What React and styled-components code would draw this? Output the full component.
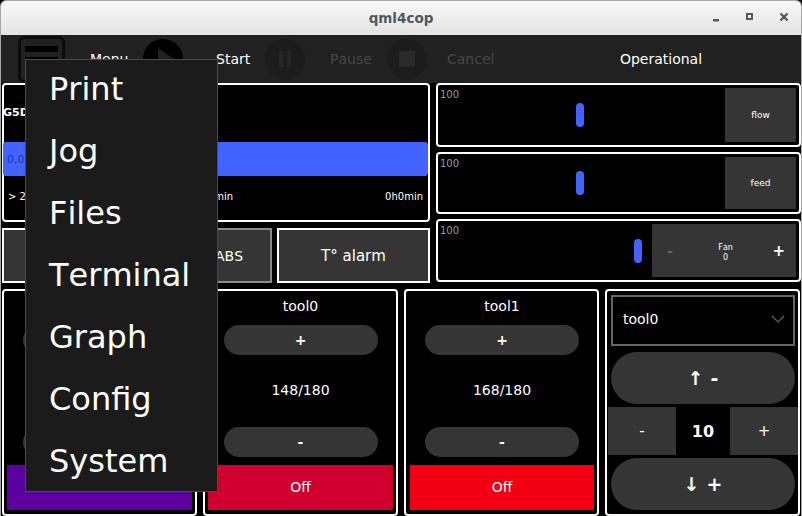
import React from 'react';
import styled, { createGlobalStyle } from 'styled-components';

const Global = createGlobalStyle`
    html, body {
        margin: 0;
        padding: 0;
        background: #000000;
    }
    * {
        box-sizing: border-box;
    }
`;

const Window = styled.div`
    position: relative;
    width: 802px;
    height: 516px;
    display: flex;
    flex-direction: column;
    overflow: hidden;
    background: #000000;
    border: 1px solid #a8a8a8;
    border-bottom: none;
    border-radius: 6px 6px 0 0;
    font-family: 'DejaVu Sans', sans-serif;
    font-kerning: none;
    color: #ffffff;
`;

const TitleBar = styled.div`
    height: 34px;
    flex: none;
    display: flex;
    align-items: center;
    justify-content: center;
    position: relative;
    background: linear-gradient(#f8f8f8, #e3e3e3);
    color: #50595e;
    font-size: 13.5px;
    font-weight: bold;
`;

const WindowButtons = styled.div`
    position: absolute;
    right: 12px;
    top: 11px;
    display: flex;
    gap: 24px;
`;

const Toolbar = styled.div`
    height: 48px;
    flex: none;
    display: flex;
    align-items: center;
    background: #212121;
    padding-left: 17px;
    font-size: 14px;
`;

const ToolItem = styled.div`
    width: ${p => p.$width}px;
    flex: none;
    display: flex;
    align-items: center;
`;

const ToolLabel = styled.span`
    margin-left: ${p => p.$left}px;
    color: ${p => (p.$off ? '#474747' : '#ffffff')};
`;

const Status = styled.span`
    margin-left: 109px;
    width: 110px;
    text-align: center;
`;

const Main = styled.div`
    flex: 1;
    display: flex;
    flex-direction: column;
    gap: 6px;
    padding: 0 0 0 1px;
`;

const TopArea = styled.div`
    height: 200px;
    display: flex;
    gap: 6px;
`;

const LeftCol = styled.div`
    width: 428px;
    display: flex;
    flex-direction: column;
    gap: 6px;
`;

const RightCol = styled.div`
    width: 365px;
    display: flex;
    flex-direction: column;
    gap: 5px;
`;

const Card = styled.div`
    border: 2px solid #ffffff;
    border-radius: 4px;
    background: #000000;
`;

const StatusCard = styled(Card)`
    height: 139px;
    display: flex;
    flex-direction: column;
`;

const FileName = styled.div`
    height: 57px;
    display: flex;
    align-items: center;
    margin-left: -1px;
    padding-bottom: 2px;
    font-size: 11px;
    font-weight: bold;
`;

const ProgressBar = styled.div`
    height: 34px;
    flex: none;
    display: flex;
    align-items: center;
    margin-left: -1px;
    padding-left: 4px;
    background: #4263ff;
    border-radius: 3px;
    color: #26389a;
    font-size: 11px;
`;

const TimeRow = styled.div`
    display: flex;
    padding: 15px 5px 0 4px;
    font-size: 10px;
`;

const TimeCell = styled.span`
    width: ${p => p.$width}px;
    text-align: ${p => p.$align || 'left'};
`;

const ButtonRow = styled.div`
    height: 55px;
    display: grid;
    grid-template-columns: 179px 86px 153px;
    gap: 5px;
`;

const ActionButton = styled.div`
    display: flex;
    align-items: center;
    justify-content: center;
    background: #353535;
    border: 2px solid ${p => p.$border};
    font-size: ${p => p.$size || 14}px;
`;

const SliderCard = styled(Card)`
    height: ${p => p.$height}px;
    display: flex;
    align-items: stretch;
    padding: 3px;
`;

const Track = styled.div`
    flex: 1;
    position: relative;
    display: flex;
    align-items: center;
    justify-content: ${p => (p.$max ? 'flex-end' : 'center')};
    padding-right: ${p => (p.$max ? '10px' : '6px')};
`;

const TrackValue = styled.span`
    position: absolute;
    left: -1px;
    top: 1px;
    color: #9a9a9a;
    font-size: 10px;
`;

const Thumb = styled.div`
    width: 8px;
    height: 24px;
    border-radius: 4px;
    background: #4263ff;
`;

const SliderButton = styled.div`
    width: 71px;
    display: flex;
    align-items: center;
    justify-content: center;
    background: #353535;
    font-size: 9px;
`;

const FanBox = styled.div`
    width: 144px;
    display: flex;
    align-items: center;
    justify-content: space-between;
    padding: 0 11px 0 15px;
    background: #353535;
`;

const FanLabel = styled.div`
    font-size: 8px;
    line-height: 10px;
    text-align: center;
    margin-left: 6px;
    padding-top: 4px;
`;

const FanStep = styled.span`
    font-size: ${p => (p.$off ? '14px' : '15px')};
    color: ${p => (p.$off ? '#666666' : '#ffffff')};
    font-weight: bold;
`;

const BottomArea = styled.div`
    flex: 1;
    display: grid;
    grid-template-columns: 195px 195px 195px 195px;
    gap: 6px;
`;

const ToolCard = styled(Card)`
    display: flex;
    flex-direction: column;
    align-items: center;
    padding: 0 3px 4px ${p => p.$left || 3}px;
    font-size: 14px;
`;

const ToolName = styled.div`
    height: 34px;
    flex: none;
    display: flex;
    align-items: center;
    padding-bottom: 5px;
`;

const StepButton = styled.div`
    width: 154px;
    height: 30px;
    flex: none;
    display: flex;
    align-items: center;
    justify-content: center;
    background: #353535;
    border-radius: 15px;
    font-weight: bold;
    font-size: 14px;
`;

const Temp = styled.div`
    height: 72px;
    flex: none;
    display: flex;
    align-items: center;
    padding-bottom: 2px;
`;

const HeatButton = styled.div`
    align-self: stretch;
    margin-top: 8px;
    flex: 1;
    display: flex;
    align-items: center;
    justify-content: center;
    padding-bottom: 2px;
    background: ${p => p.$color};
`;

const JogCard = styled(Card)`
    display: flex;
    flex-direction: column;
    padding: 4px 0;
    font-size: 14px;
`;

const Combo = styled.div`
    height: 51px;
    margin: 0 3px 0 4px;
    flex: none;
    display: flex;
    align-items: center;
    justify-content: space-between;
    padding: 0 8px 4px 10px;
    border: 2px solid #666666;
`;

const JogPill = styled.div`
    height: 52px;
    margin: ${p => p.$top}px 3px 0 4px;
    flex: none;
    display: flex;
    align-items: center;
    justify-content: center;
    gap: 7px;
    background: #353535;
    border-radius: 26px;
    font-weight: bold;
    font-size: 19px;
`;

const JogRow = styled.div`
    height: 48px;
    flex: none;
    display: grid;
    grid-template-columns: 68px 1fr 68px;
    margin: 3px 0 0 1px;
`;

const JogStep = styled.div`
    display: flex;
    align-items: center;
    justify-content: center;
    background: #353535;
    font-size: 15px;
`;

const JogValue = styled.div`
    display: flex;
    align-items: center;
    justify-content: center;
    font-weight: bold;
    font-size: 16px;
`;

const MenuPanel = styled.div`
    position: absolute;
    left: 24px;
    top: 58px;
    width: 193px;
    height: 433px;
    padding: 0 0 0 23px;
    background: #1b1b1b;
    border: 1px solid #4a4a4a;
    display: flex;
    flex-direction: column;
`;

const MenuItem = styled.div`
    height: 62px;
    flex: none;
    display: flex;
    align-items: center;
    padding-bottom: 4px;
    font-size: 32px;
`;

const MinIcon = () => (
    <svg width="10" height="10" viewBox="0 0 10 10" fill="#50595e">
        <rect x="2" y="7" width="6" height="2.5" />
    </svg>
);

const MaxIcon = () => (
    <svg width="10" height="10" viewBox="0 0 10 10" fill="none" stroke="#50595e" strokeWidth="2">
        <rect x="2" y="2" width="5" height="5" />
    </svg>
);

const CloseIcon = () => (
    <svg width="10" height="10" viewBox="0 0 10 10" fill="none" stroke="#50595e" strokeWidth="2.4">
        <path d="M1.5 1.5 L8.5 8.5 M8.5 1.5 L1.5 8.5" />
    </svg>
);

const HamburgerIcon = () => (
    <svg width="47" height="47" viewBox="0 0 47 47">
        <rect x="1.5" y="1.5" width="44" height="44" rx="5" fill="none" stroke="#0c0c0c" strokeWidth="3" />
        <rect x="7" y="10" width="33" height="6" fill="#000000" />
        <rect x="7" y="21" width="33" height="6" fill="#000000" />
        <rect x="7" y="32" width="33" height="6" fill="#000000" />
    </svg>
);

const RoundIcon = ({ circle, mark, type }) => (
    <svg width="40" height="40" viewBox="0 0 40 40">
        <circle cx="20" cy="20" r="20" fill={circle} />
        {type === 'play' && <path d="M15 9 L31 20 L15 31 Z" fill={mark} />}
        {type === 'pause' && (
            <g fill={mark}>
                <rect x="14" y="12" width="4" height="16" />
                <rect x="22" y="12" width="4" height="16" />
            </g>
        )}
        {type === 'stop' && <rect x="12" y="12" width="16" height="16" fill={mark} />}
    </svg>
);

const Chevron = () => (
    <svg width="14" height="8" viewBox="0 0 14 8" fill="none" stroke="#666666" strokeWidth="1.2">
        <path d="M1 1 L7 7 L13 1" />
    </svg>
);

const menuItems = ['Print', 'Jog', 'Files', 'Terminal', 'Graph', 'Config', 'System'];

const tools = [
    { id: 'bed', name: '', temp: '', color: '#5c00a0' },
    { id: 'tool0', name: 'tool0', temp: '148/180', color: '#d0002e' },
    { id: 'tool1', name: 'tool1', temp: '168/180', color: '#f00010', left: 4 },
];

function App() {
    return (
        <Window>
            <Global />
            <TitleBar>
                qml4cop
                <WindowButtons>
                    <MinIcon />
                    <MaxIcon />
                    <CloseIcon />
                </WindowButtons>
            </TitleBar>
            <Toolbar>
                <ToolItem $width={125}>
                    <HamburgerIcon />
                    <ToolLabel $left={25}>Menu</ToolLabel>
                </ToolItem>
                <ToolItem $width={122}>
                    <RoundIcon type="play" circle="#000000" mark="#212121" />
                    <ToolLabel $left={33}>Start</ToolLabel>
                </ToolItem>
                <ToolItem $width={122}>
                    <RoundIcon type="pause" circle="#1c1c1c" mark="#262626" />
                    <ToolLabel $left={25} $off>Pause</ToolLabel>
                </ToolItem>
                <ToolItem $width={110}>
                    <RoundIcon type="stop" circle="#1c1c1c" mark="#2a2a2a" />
                    <ToolLabel $left={20} $off>Cancel</ToolLabel>
                </ToolItem>
                <Status>Operational</Status>
            </Toolbar>
            <Main>
                <TopArea>
                    <LeftCol>
                        <StatusCard>
                            <FileName>G5D</FileName>
                            <ProgressBar>0,00</ProgressBar>
                            <TimeRow>
                                <TimeCell $width={100}>&gt; 2</TimeCell>
                                <TimeCell $width={125} $align="right">0h0min</TimeCell>
                                <TimeCell $width={190} $align="right">0h0min</TimeCell>
                            </TimeRow>
                        </StatusCard>
                        <ButtonRow>
                            <ActionButton $border="#ffffff" />
                            <ActionButton $border="#8a8a8a">ABS</ActionButton>
                            <ActionButton $border="#ffffff" $size={15}>T° alarm</ActionButton>
                        </ButtonRow>
                    </LeftCol>
                    <RightCol>
                        <SliderCard $height={64}>
                            <Track>
                                <TrackValue>100</TrackValue>
                                <Thumb />
                            </Track>
                            <SliderButton>flow</SliderButton>
                        </SliderCard>
                        <SliderCard $height={62}>
                            <Track>
                                <TrackValue>100</TrackValue>
                                <Thumb />
                            </Track>
                            <SliderButton>feed</SliderButton>
                        </SliderCard>
                        <SliderCard $height={63}>
                            <Track $max>
                                <TrackValue>100</TrackValue>
                                <Thumb />
                            </Track>
                            <FanBox>
                                <FanStep $off>-</FanStep>
                                <FanLabel>Fan<br />0</FanLabel>
                                <FanStep>+</FanStep>
                            </FanBox>
                        </SliderCard>
                    </RightCol>
                </TopArea>
                <BottomArea>
                    {tools.map(tool => (
                        <ToolCard key={tool.id} $left={tool.left}>
                            <ToolName>{tool.name}</ToolName>
                            <StepButton>+</StepButton>
                            <Temp>{tool.temp}</Temp>
                            <StepButton>-</StepButton>
                            <HeatButton $color={tool.color}>Off</HeatButton>
                        </ToolCard>
                    ))}
                    <JogCard>
                        <Combo>
                            tool0
                            <Chevron />
                        </Combo>
                        <JogPill $top={6}>
                            <span>↑</span>
                            <span>-</span>
                        </JogPill>
                        <JogRow>
                            <JogStep>-</JogStep>
                            <JogValue>10</JogValue>
                            <JogStep>+</JogStep>
                        </JogRow>
                        <JogPill $top={3}>
                            <span>↓</span>
                            <span>+</span>
                        </JogPill>
                    </JogCard>
                </BottomArea>
            </Main>
            <MenuPanel>
                {menuItems.map(item => (
                    <MenuItem key={item}>{item}</MenuItem>
                ))}
            </MenuPanel>
        </Window>
    );
}

export default App;
